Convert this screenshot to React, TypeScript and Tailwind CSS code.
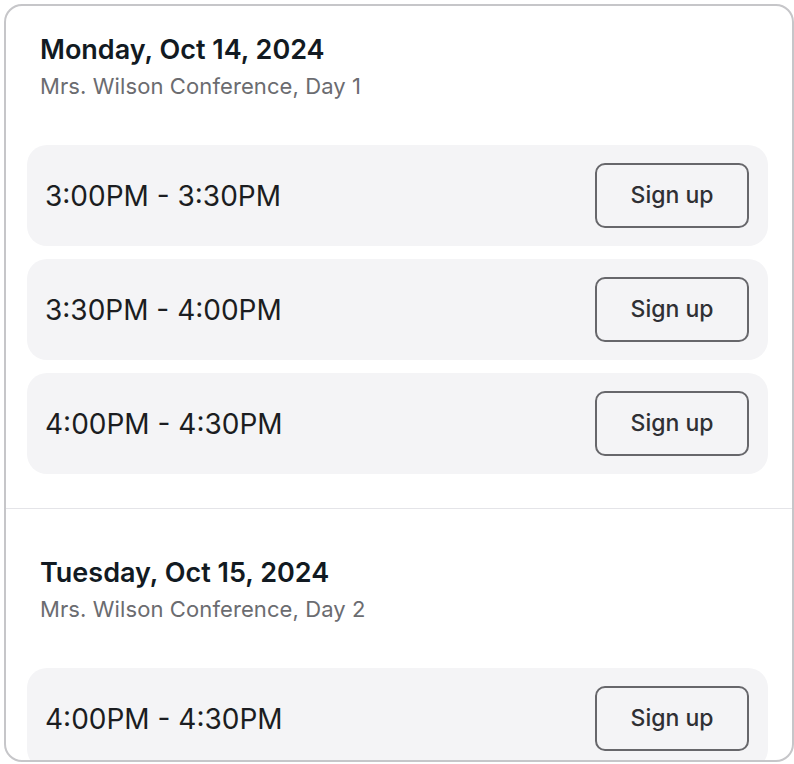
import React from "react";

type Day = {
  title: string;
  subtitle: string;
  slots: string[];
};

const days: Day[] = [
  {
    title: "Monday, Oct 14, 2024",
    subtitle: "Mrs. Wilson Conference, Day 1",
    slots: ["3:00PM - 3:30PM", "3:30PM - 4:00PM", "4:00PM - 4:30PM"],
  },
  {
    title: "Tuesday, Oct 15, 2024",
    subtitle: "Mrs. Wilson Conference, Day 2",
    slots: ["4:00PM - 4:30PM"],
  },
];

function SlotRow({ time }: { time: string }) {
  return (
    <div className="flex h-[101px] items-center justify-between rounded-[20px] bg-[#f4f4f6] pl-[18px] pr-[19px]">
      <span className="text-[28px] leading-none text-[#1b1d21]">{time}</span>
      <button className="flex h-[65px] w-[154px] items-center justify-center rounded-[10px] border-2 border-[#67676b] text-[23px] font-medium text-[#2f3034]">
        Sign up
      </button>
    </div>
  );
}

export default function App() {
  return (
    <div
      className="min-h-screen bg-white pl-[4px] pt-[4px]"
      style={{ fontFamily: "Inter, 'Noto Sans', sans-serif" }}
    >
      <div className="h-[758px] overflow-hidden rounded-[18px] border-2 border-[#c6c6c9] bg-white">
        {days.map((day, i) => (
          <section
            key={day.title}
            className={
              i === 0
                ? "border-b border-[#e4e4e8] pb-[34px] pl-[21px] pr-[24px] pt-[28px]"
                : "pl-[21px] pr-[24px] pt-[48px]"
            }
          >
            <div className="px-[13px]">
              <h2 className="text-[27px] font-semibold leading-[32px] text-[#121a22]">
                {day.title}
              </h2>
              <p className="mt-[6px] text-[22px] leading-[28px] tracking-[0.1px] text-[#6b6c70]">
                {day.subtitle}
              </p>
            </div>
            <div
              className={
                i === 0
                  ? "mt-[45px] flex flex-col gap-[13px]"
                  : "mt-[45px] flex flex-col gap-[13px]"
              }
            >
              {day.slots.map((slot, j) => (
                <SlotRow key={j} time={slot} />
              ))}
            </div>
          </section>
        ))}
      </div>
    </div>
  );
}
